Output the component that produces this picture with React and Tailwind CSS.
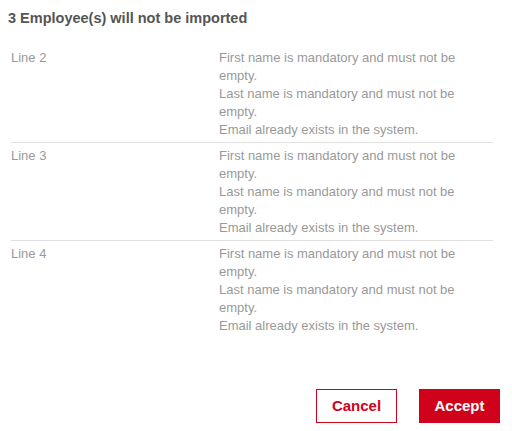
import React from 'react';

const rows = [
    { line: 'Line 2' },
    { line: 'Line 3' },
    { line: 'Line 4' },
];

const errors = [
    'First name is mandatory and must not be empty.',
    'Last name is mandatory and must not be empty.',
    'Email already exists in the system.',
];

const App = () => {
    return (
        <div className="w-[512px] h-[431px] bg-white flex flex-col font-['Liberation_Sans',Arial,sans-serif]">
            <h2 className="text-[14.5px] font-bold text-[#555] pl-2 pt-[9px] leading-[18px]">
                3 Employee(s) will not be imported
            </h2>

            <div className="mt-[18px] ml-[11px] mr-[19px]">
                {rows.map((row, i) => (
                    <div
                        key={row.line}
                        className={`flex pt-[4px] pb-[3px] ${i < rows.length - 1 ? 'border-b border-[#e0e0e0]' : ''}`}
                    >
                        <div className="w-[208px] shrink-0 text-[13px] leading-[18px] text-[#999]">{row.line}</div>
                        <div className="flex-1 pr-8 text-[13px] leading-[18px] text-[#999]">
                            {errors.map((e) => (
                                <div key={e}>{e}</div>
                            ))}
                        </div>
                    </div>
                ))}
            </div>

            <div className="mt-auto mb-[8px] flex justify-end gap-[22px] pr-3">
                <button className="w-[81px] h-[34px] border border-[#d0021b] text-[#d0021b] font-bold text-[15px] bg-white">
                    Cancel
                </button>
                <button className="w-[81px] h-[34px] bg-[#d0021b] text-white font-bold text-[15px]">
                    Accept
                </button>
            </div>
        </div>
    );
};

export default App;
